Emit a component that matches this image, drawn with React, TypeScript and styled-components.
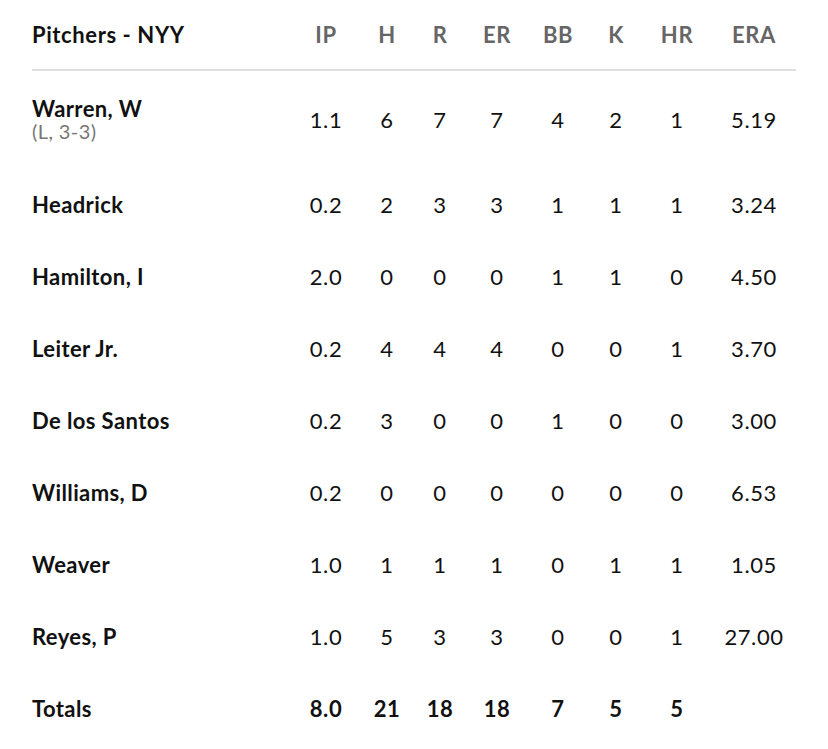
import React from 'react'
import styled, { createGlobalStyle } from 'styled-components'

const GlobalStyle = createGlobalStyle`
  body {
    margin: 0;
    background: #fff;
    font-family: Lato, 'Noto Sans', sans-serif;
    color: #111;
  }
`

const COLS = '263px 62px 60px 46px 68px 54px 62px 60px 94px'

const Table = styled.div`
  padding: 0 27px 0 32px;
  width: 769px;
`

const HeaderRow = styled.div`
  display: grid;
  grid-template-columns: ${COLS};
  align-items: center;
  height: 69px;
  border-bottom: 2px solid #dedede;
  margin-right: 5px;
`

const Row = styled.div<{ tall?: boolean }>`
  display: grid;
  grid-template-columns: ${COLS};
  align-items: center;
  height: ${({ tall }) => (tall ? '97px' : '72px')};
`

const TeamTitle = styled.div`
  font-size: 22px;
  font-weight: 700;
  color: #111;
  letter-spacing: 0.6px;
`

const ColLabel = styled.div`
  font-size: 22px;
  font-weight: 700;
  color: #666;
  text-align: center;
  letter-spacing: 0.6px;
`

const NameCell = styled.div`
  display: flex;
  flex-direction: column;
`

const Name = styled.span`
  font-size: 22px;
  font-weight: 700;
  color: #111;
  line-height: 23px;
  letter-spacing: 0.4px;
`

const Decision = styled.span`
  font-size: 20px;
  color: #777;
  line-height: 22px;
  letter-spacing: 0.4px;
`

const Stat = styled.div<{ bold?: boolean }>`
  font-size: 22px;
  font-weight: ${({ bold }) => (bold ? 700 : 400)};
  text-align: center;
  color: #111;
  letter-spacing: 0.6px;
`

const columns = ['IP', 'H', 'R', 'ER', 'BB', 'K', 'HR', 'ERA']

const pitchers = [
  { name: 'Warren, W', note: '(L, 3-3)', stats: ['1.1', '6', '7', '7', '4', '2', '1', '5.19'] },
  { name: 'Headrick', stats: ['0.2', '2', '3', '3', '1', '1', '1', '3.24'] },
  { name: 'Hamilton, I', stats: ['2.0', '0', '0', '0', '1', '1', '0', '4.50'] },
  { name: 'Leiter Jr.', stats: ['0.2', '4', '4', '4', '0', '0', '1', '3.70'] },
  { name: 'De los Santos', stats: ['0.2', '3', '0', '0', '1', '0', '0', '3.00'] },
  { name: 'Williams, D', stats: ['0.2', '0', '0', '0', '0', '0', '0', '6.53'] },
  { name: 'Weaver', stats: ['1.0', '1', '1', '1', '0', '1', '1', '1.05'] },
  { name: 'Reyes, P', stats: ['1.0', '5', '3', '3', '0', '0', '1', '27.00'] }
]

const totals = ['8.0', '21', '18', '18', '7', '5', '5', '']

export default function App() {
  return (
    <>
      <GlobalStyle />
      <Table>
        <HeaderRow>
          <TeamTitle>Pitchers - NYY</TeamTitle>
          {columns.map(c => (
            <ColLabel key={c}>{c}</ColLabel>
          ))}
        </HeaderRow>
        {pitchers.map(p => (
          <Row key={p.name} tall={!!p.note}>
            <NameCell>
              <Name>{p.name}</Name>
              {p.note && <Decision>{p.note}</Decision>}
            </NameCell>
            {p.stats.map((s, i) => (
              <Stat key={i}>{s}</Stat>
            ))}
          </Row>
        ))}
        <Row>
          <NameCell>
            <Name>Totals</Name>
          </NameCell>
          {totals.map((s, i) => (
            <Stat key={i} bold>
              {s}
            </Stat>
          ))}
        </Row>
      </Table>
    </>
  )
}
